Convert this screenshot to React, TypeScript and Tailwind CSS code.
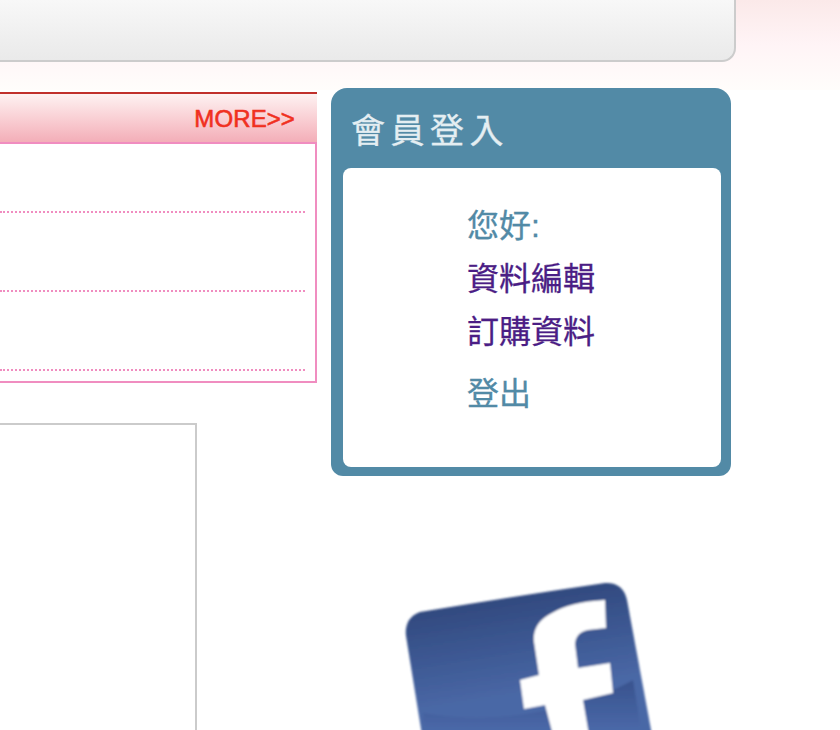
export default function App() {
  const cjk = { fontFamily: '"Liberation Sans", "Noto Sans CJK TC", sans-serif' };
  return (
    <div className="w-[840px] h-[730px] overflow-hidden bg-white" style={cjk}>
      <div className="h-[90px] bg-gradient-to-b from-[#fbe9e9] via-[#fff4f6] via-50% to-[#fffdfb]">
        <div className="w-[736px] h-[62px] rounded-br-[14px] border-r-2 border-b-2 border-[#cccccc] bg-gradient-to-b from-[#f8f8f8] via-[#efefef] via-60% to-[#eaeaea]" />
      </div>
      <div className="flex -mt-[2px]">
        <div className="w-[317px] shrink-0 pt-[4px]">
          <div className="h-[50px] border-t-2 border-[#c0302c] bg-gradient-to-b from-[#fdf2f2] to-[#f3aeb8] flex items-center justify-end pr-[22px]">
            <span className="text-[24px] leading-none text-[#f0301f] tracking-[0.1px] [-webkit-text-stroke:0.6px] mt-[1px]">MORE&gt;&gt;</span>
          </div>
          <div className="h-[241px] border-2 border-[#f08dc0] border-l-0 pr-[10px]">
            <div className="h-[69px] border-b-2 border-dotted border-[#f08dc0]" />
            <div className="h-[79px] border-b-2 border-dotted border-[#f08dc0]" />
            <div className="h-[79px] border-b-2 border-dotted border-[#f08dc0]" />
          </div>
          <div className="w-[197px] h-[400px] mt-[40px] border-t-2 border-r-2 border-[#cbcbcb]" />
        </div>
        <div className="w-[400px] shrink-0 ml-[14px]">
          <div className="h-[388px] bg-[#528aa6] rounded-t-[16px] rounded-b-[12px] pl-[12px] pr-[10px] pb-[9px] flex flex-col">
            <div className="h-[80px] pt-[23px] pl-[8px] text-[34px] leading-[40px] tracking-[5.5px] text-[#e4eef2] [-webkit-text-stroke:0.3px] whitespace-nowrap">
              會員登入
            </div>
            <div className="flex-1 bg-white rounded-[8px] pl-[124px] pt-[34px] text-[32px] leading-[48px] [-webkit-text-stroke:0.3px]">
              <div className="h-[53px] text-[#528aa6]">您好:</div>
              <div className="h-[53px] text-[#4b1d85]">資料編輯</div>
              <div className="h-[62px] text-[#4b1d85]">訂購資料</div>
              <div className="text-[#528aa6]">登出</div>
            </div>
          </div>
          <svg className="block mt-[84px] ml-[49px]" width="300" height="170" viewBox="0 0 300 170">
            <defs>
              <linearGradient id="fbg" x1="0" y1="30" x2="20" y2="155" gradientUnits="userSpaceOnUse">
                <stop offset="0" stopColor="#2c4274" />
                <stop offset="0.55" stopColor="#3b5690" />
                <stop offset="1" stopColor="#4a68a6" />
              </linearGradient>
              <linearGradient id="fgl" x1="0" y1="125" x2="0" y2="170" gradientUnits="userSpaceOnUse">
                <stop offset="0" stopColor="#3a5590" />
                <stop offset="1" stopColor="#4a68a8" />
              </linearGradient>
              <filter id="soft" x="-10%" y="-10%" width="120%" height="120%">
                <feGaussianBlur stdDeviation="1" />
              </filter>
            </defs>
            <g filter="url(#soft)">
              <path d="M42 175 L26 76 Q24 58 40 52 Q130 37 225 23 Q243 22 247 40 L272 175 Z" fill="url(#fbg)" />
              <path d="M43 153 Q110 165 180 147 Q225 136 253 120 L262 175 H44 Z" fill="url(#fgl)" />
              <path d="M225 40 Q190 42 172 53 Q152 63 154 82 L159 115 L140 120 L144 149 L165 145 L173 175 L209 175 L203 140 L233 133 L230 103 L198 108 L195 84 Q196 72 208 70 L226 68 Z" fill="#ffffff" />
            </g>
          </svg>
        </div>
      </div>
    </div>
  );
}
